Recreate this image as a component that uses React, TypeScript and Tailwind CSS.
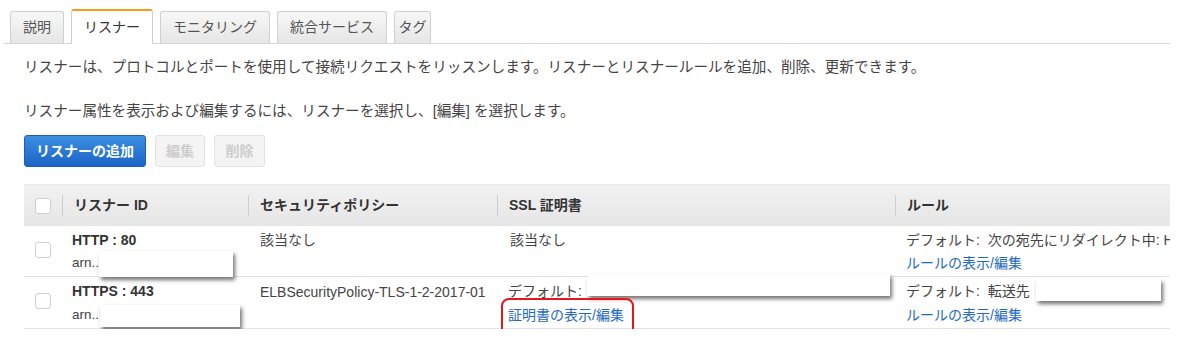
import React from 'react';

const tabs = [
  { label: '説明', w: 'w-[54px]' },
  { label: 'リスナー', w: 'w-[82px]', active: true },
  { label: 'モニタリング', w: 'w-[110px]' },
  { label: '統合サービス', w: 'w-[110px]' },
  { label: 'タグ', w: 'w-[37px]' },
];

function Redact({ className }: { className: string }) {
  // white boxes hiding ARNs in the original capture
  return (
    <div
      className={`absolute bg-white shadow-[2px_3px_4px_rgba(0,0,0,0.55)] ${className}`}
    />
  );
}

function Checkbox() {
  return (
    <span className="block w-[16px] h-[16px] rounded-[3px] border border-[#cfcfcf] bg-white" />
  );
}

function HeaderCell({ label, w }: { label: string; w: string }) {
  return (
    <div className={`${w} flex items-center h-full shrink-0`}>
      <span className="w-px h-[21px] bg-[#cfcfcf]" />
      <span className="pl-[11px] font-bold text-[14px] text-[#333]">{label}</span>
    </div>
  );
}

export default function App() {
  return (
    <div className="w-[1190px] h-[356px] bg-white overflow-hidden font-['Liberation_Sans','Noto_Sans_CJK_JP',sans-serif] text-[#444]">
      {/* tabs */}
      <div className="ml-[4px] w-[1166px] pl-[6px] pt-[9px] flex items-end gap-[7px] border-b border-[#d6d6d6]">
        {tabs.map((t) =>
          t.active ? (
            <div
              key={t.label}
              className={`${t.w} h-[35px] -mb-px flex items-center justify-center bg-white border border-b-0 border-[#cfcfcf] border-t-2 border-t-[#f59a1c] rounded-t-[3px] text-[14px] text-[#333]`}
            >
              {t.label}
            </div>
          ) : (
            <div
              key={t.label}
              className={`${t.w} h-[32px] flex items-center justify-center bg-gradient-to-b from-[#f7f7f7] to-[#e6e6e6] border border-b-0 border-[#cfcfcf] rounded-t-[3px] text-[14px] text-[#555]`}
            >
              {t.label}
            </div>
          ),
        )}
      </div>

      <div className="pl-[24px] pr-[20px]">
        <p className="mt-[13px] text-[14.6px] leading-[20px]">
          リスナーは、プロトコルとポートを使用して接続リクエストをリッスンします。リスナーとリスナールールを追加、削除、更新できます。
        </p>
        <p className="mt-[24px] text-[14.6px] leading-[20px]">
          リスナー属性を表示および編集するには、リスナーを選択し、[編集] を選択します。
        </p>

        {/* actions */}
        <div className="mt-[14px] flex gap-[9px]">
          <button className="w-[122px] h-[32px] rounded-[3px] border border-[#1d5fb8] bg-gradient-to-b from-[#3c8fe2] to-[#1b64c6] text-white font-bold text-[14px]">
            リスナーの追加
          </button>
          <button className="w-[50px] h-[32px] rounded-[3px] border border-[#e2e2e2] bg-[#f4f4f4] text-[#cdcdcd] font-bold text-[14px]">
            編集
          </button>
          <button className="w-[51px] h-[32px] rounded-[3px] border border-[#e2e2e2] bg-[#f4f4f4] text-[#cdcdcd] font-bold text-[14px]">
            削除
          </button>
        </div>

        {/* table */}
        <div className="mt-[17px] w-[1146px] overflow-hidden">
          <div className="h-[42px] flex items-center bg-gradient-to-b from-[#f1f1f1] to-[#e6e6e6] border-t border-[#e9e9e9]">
            <div className="w-[38px] shrink-0 flex justify-center">
              <Checkbox />
            </div>
            <HeaderCell label="リスナー ID" w="w-[186px]" />
            <HeaderCell label="セキュリティポリシー" w="w-[249px]" />
            <HeaderCell label="SSL 証明書" w="w-[398px]" />
            <HeaderCell label="ルール" w="w-[275px]" />
          </div>

          {/* row 1 */}
          <div className="h-[51px] flex border-b border-[#e2e2e2] text-[14px]">
            <div className="w-[38px] shrink-0 flex justify-center pt-[16px]">
              <Checkbox />
            </div>
            <div className="w-[186px] shrink-0 pl-[10px] pt-[3px] relative">
              <div className="font-bold text-[14px] leading-[22px] text-[#333]">HTTP : 80</div>
              <div className="text-[13.5px] leading-[24px]">arn..</div>
              <Redact className="left-[37px] top-[25px] w-[134px] h-[26px]" />
            </div>
            <div className="w-[249px] shrink-0 pl-[12px] pt-[3px] leading-[22px]">該当なし</div>
            <div className="w-[398px] shrink-0 pl-[13px] pt-[3px] leading-[22px]">該当なし</div>
            <div className="w-[275px] shrink-0 pl-[11px] pt-[3px] whitespace-nowrap">
              <div className="leading-[22px]">デフォルト:&nbsp; 次の宛先にリダイレクト中: HTTPS</div>
              <div className="leading-[24px] text-[#1f6ac0]">ルールの表示/編集</div>
            </div>
          </div>

          {/* row 2 */}
          <div className="h-[52px] flex border-b border-[#e2e2e2] text-[14px]">
            <div className="w-[38px] shrink-0 flex justify-center pt-[16px]">
              <Checkbox />
            </div>
            <div className="w-[186px] shrink-0 pl-[10px] pt-[3px] relative">
              <div className="font-bold text-[14px] leading-[22px] text-[#333]">HTTPS : 443</div>
              <div className="text-[13.5px] leading-[26px]">arn..</div>
              <Redact className="left-[38px] top-[28px] w-[140px] h-[22px]" />
            </div>
            <div className="w-[249px] shrink-0 pl-[12px] pt-[4px] leading-[22px] text-[14px]">
              ELBSecurityPolicy-TLS-1-2-2017-01
            </div>
            <div className="w-[398px] shrink-0 pl-[11px] pt-[3px] relative">
              <div className="leading-[22px]">デフォルト:</div>
              <div className="leading-[26px] text-[#1f6ac0]">証明書の表示/編集</div>
              <Redact className="left-[90px] -top-[3px] w-[303px] h-[22px]" />
              <div className="absolute left-[4px] top-[21px] w-[133px] h-[38px] rounded-[8px] border-2 border-[#e8161a]" />
            </div>
            <div className="w-[275px] shrink-0 pl-[11px] pt-[3px] whitespace-nowrap relative">
              <div className="leading-[22px]">デフォルト:&nbsp; 転送先</div>
              <div className="leading-[26px] text-[#1f6ac0]">ルールの表示/編集</div>
              <Redact className="left-[141px] top-[2px] w-[125px] h-[22px]" />
            </div>
          </div>
        </div>
      </div>
    </div>
  );
}
